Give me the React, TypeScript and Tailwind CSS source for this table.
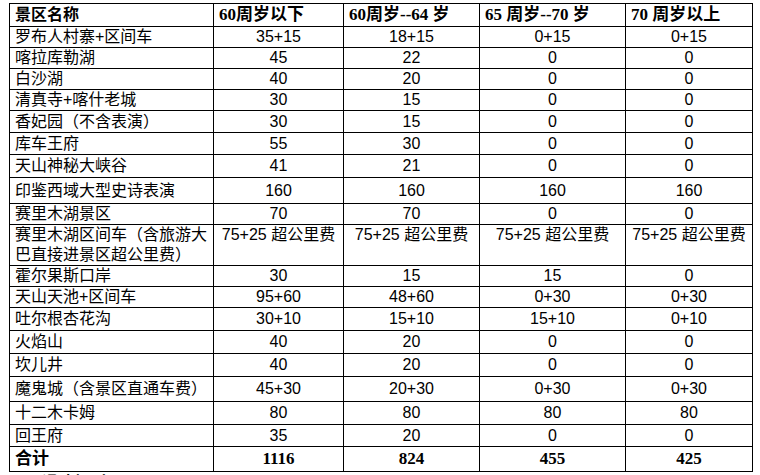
const rows: { name: string; v: string[]; h: string }[] = [
  { name: "罗布人村寨+区间车", v: ["35+15", "18+15", "0+15", "0+15"], h: "h-[20px]" },
  { name: "喀拉库勒湖", v: ["45", "22", "0", "0"], h: "h-[21px]" },
  { name: "白沙湖", v: ["40", "20", "0", "0"], h: "h-[21px]" },
  { name: "清真寺+喀什老城", v: ["30", "15", "0", "0"], h: "h-[21px]" },
  { name: "香妃园（不含表演）", v: ["30", "15", "0", "0"], h: "h-[22px]" },
  { name: "库车王府", v: ["55", "30", "0", "0"], h: "h-[22px]" },
  { name: "天山神秘大峡谷", v: ["41", "21", "0", "0"], h: "h-[23px]" },
  { name: "印鉴西域大型史诗表演", v: ["160", "160", "160", "160"], h: "h-[26px]" },
  { name: "赛里木湖景区", v: ["70", "70", "0", "0"], h: "h-[20px]" },
  {
    name: "赛里木湖区间车（含旅游大巴直接进景区超公里费）",
    v: ["75+25 超公里费", "75+25 超公里费", "75+25 超公里费", "75+25 超公里费"],
    h: "h-[40px]",
  },
  { name: "霍尔果斯口岸", v: ["30", "15", "15", "0"], h: "h-[20px]" },
  { name: "天山天池+区间车", v: ["95+60", "48+60", "0+30", "0+30"], h: "h-[20px]" },
  { name: "吐尔根杏花沟", v: ["30+10", "15+10", "15+10", "0+10"], h: "h-[23px]" },
  { name: "火焰山", v: ["40", "20", "0", "0"], h: "h-[23px]" },
  { name: "坎儿井", v: ["40", "20", "0", "0"], h: "h-[23px]" },
  { name: "魔鬼城（含景区直通车费）", v: ["45+30", "20+30", "0+30", "0+30"], h: "h-[25px]" },
  { name: "十二木卡姆", v: ["80", "80", "80", "80"], h: "h-[23px]" },
  { name: "回王府", v: ["35", "20", "0", "0"], h: "h-[22px]" },
];

const headers = ["60周岁以下", "60周岁--64 岁", "65 周岁--70 岁", "70 周岁以上"];
const totals = ["1116", "824", "455", "425"];

const sans = "font-['Liberation_Sans','Noto_Sans_CJK_SC',sans-serif]";
const serif = "font-['Liberation_Serif','Noto_Sans_CJK_SC',serif]";

export default function App() {
  return (
    <div className="w-[760px] h-[475px] overflow-hidden bg-white text-black">
      <div className="h-[3px] overflow-hidden">
        <div className={`-mt-[17px] pl-[14px] text-[16px] leading-[20px] font-bold ${sans}`}>
          二、景区门票 老年人优惠价格 （单位：元/人）
        </div>
      </div>
      <table className={`ml-[9px] w-[743px] table-fixed border-collapse text-[16px] leading-[20px] ${sans}`}>
        <colgroup>
          <col className="w-[204px]" />
          <col className="w-[130px]" />
          <col className="w-[136px]" />
          <col className="w-[146px]" />
          <col className="w-[127px]" />
        </colgroup>
        <tbody>
          <tr className="h-[23px]">
            <td className="border border-black pl-[5px] p-0 font-bold">景区名称</td>
            {headers.map((h) => (
              <td key={h} className={`border border-black pl-[5px] p-0 font-bold text-[17px] ${serif}`}>
                {h}
              </td>
            ))}
          </tr>
          {rows.map((r) => {
            const tall = r.h === "h-[40px]";
            return (
              <tr key={r.name} className={r.h}>
                <td className={`border border-black p-0 pl-[5px] ${tall ? "align-top" : "align-middle"}`}>
                  {r.name}
                </td>
                {r.v.map((x, i) => (
                  <td
                    key={i}
                    className={`border border-black p-0 text-center ${tall ? "align-top" : "align-middle"}`}
                  >
                    {x}
                  </td>
                ))}
              </tr>
            );
          })}
          <tr className="h-[25px]">
            <td className="border border-black p-0 pl-[5px] font-bold text-[17px]">合计</td>
            {totals.map((t) => (
              <td key={t} className={`border border-black p-0 text-center font-bold text-[17px] ${serif}`}>
                {t}
              </td>
            ))}
          </tr>
        </tbody>
      </table>
      <div className={`pl-[10px] pt-[1px] text-[16px] leading-[20px] font-bold ${sans}`}>一、退改规则</div>
    </div>
  );
}
